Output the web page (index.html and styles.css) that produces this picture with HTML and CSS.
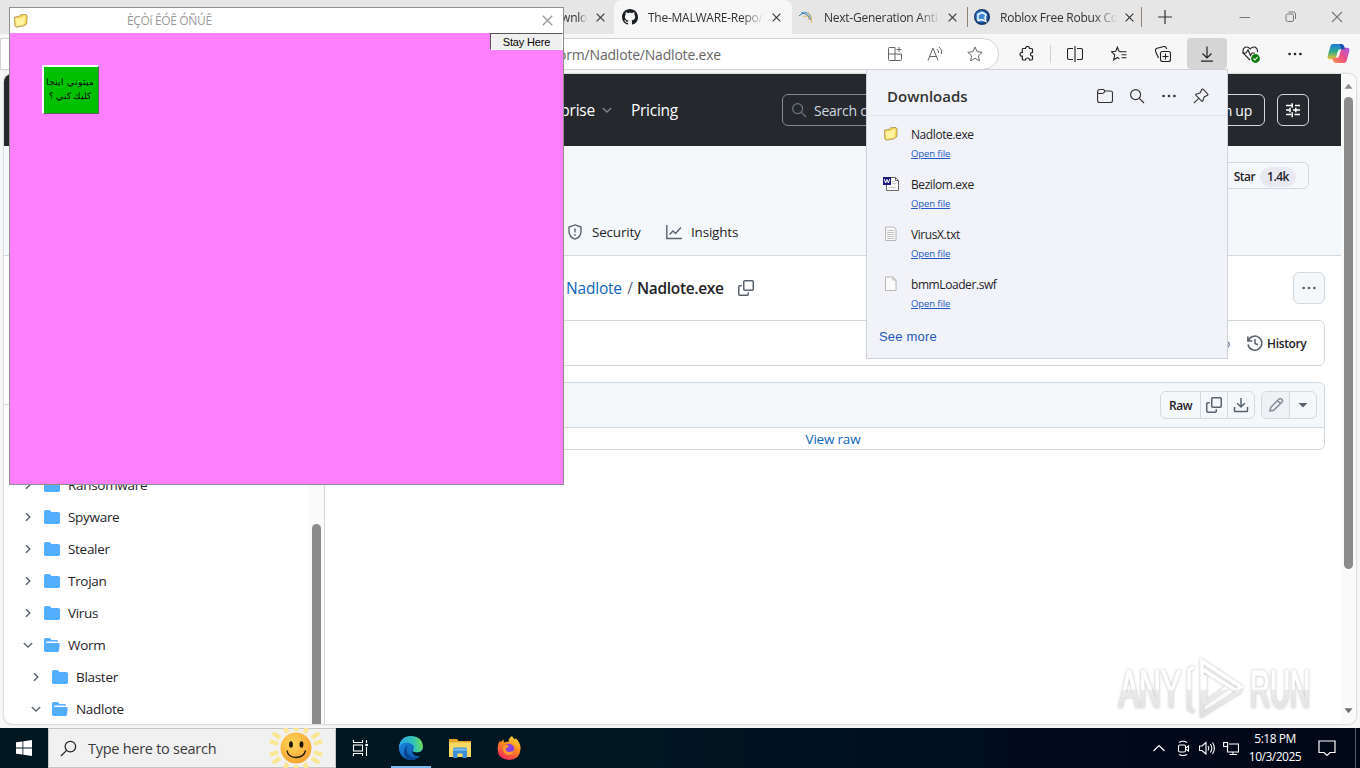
FILE: index.html
```html
<!DOCTYPE html>
<html lang="en">
  <head>
    <meta charset="UTF-8" />
    <meta name="viewport" content="width=device-width, initial-scale=1.0" />
    <title>Desktop</title>
    <link rel="stylesheet" href="styles.css">
  </head>
  <body>
    <svg class="defs" width="0" height="0">
      <symbol id="close" viewBox="0 0 10 10"><path d="M.7.7l8.6 8.6M9.3.7L.7 9.3" fill="none" stroke="currentColor" stroke-width="1.2"/></symbol>
      <symbol id="chev" viewBox="0 0 12 12"><path d="M4 2.2L7.8 6 4 9.8" fill="none" stroke="currentColor" stroke-width="1.4"/></symbol>
      <symbol id="chevDown" viewBox="0 0 12 12"><path d="M1.8 4L6 8l4.2-4" fill="none" stroke="currentColor" stroke-width="1.4"/></symbol>
      <symbol id="folder" viewBox="0 0 16 16"><path fill="#54aeff" d="M1.75 1A1.75 1.75 0 0 0 0 2.75v10.5C0 14.216.784 15 1.75 15h12.5A1.75 1.75 0 0 0 16 13.25v-8.5A1.75 1.75 0 0 0 14.25 3H7.5a.25.25 0 0 1-.2-.1l-.9-1.2C6.07 1.26 5.55 1 5 1H1.75Z"/></symbol>
      <symbol id="folderOpen" viewBox="0 0 16 16"><path fill="#54aeff" d="M.513 1.513A1.75 1.75 0 0 1 1.75 1h3.5c.55 0 1.07.26 1.4.7l.9 1.2a.25.25 0 0 0 .2.1H13a1 1 0 0 1 1 1v.5H2.75a.75.75 0 0 0 0 1.5h11.978a1 1 0 0 1 .994 1.117L15 13.25A1.75 1.75 0 0 1 13.25 15H1.75A1.75 1.75 0 0 1 0 13.25V2.75c0-.464.184-.91.513-1.237Z"/></symbol>
      <symbol id="copy" viewBox="0 0 16 16"><path fill="currentColor" d="M0 6.75C0 5.784.784 5 1.75 5h1.5a.75.75 0 0 1 0 1.5h-1.5a.25.25 0 0 0-.25.25v7.5c0 .138.112.25.25.25h7.5a.25.25 0 0 0 .25-.25v-1.5a.75.75 0 0 1 1.5 0v1.5A1.75 1.75 0 0 1 9.25 16h-7.5A1.75 1.75 0 0 1 0 14.25ZM5 1.75C5 .784 5.784 0 6.75 0h7.5C15.216 0 16 .784 16 1.75v7.5A1.75 1.75 0 0 1 14.25 11h-7.5A1.75 1.75 0 0 1 5 9.25Zm1.75-.25a.25.25 0 0 0-.25.25v7.5c0 .138.112.25.25.25h7.5a.25.25 0 0 0 .25-.25v-7.5a.25.25 0 0 0-.25-.25Z"/></symbol>
      <symbol id="dots" viewBox="0 0 16 16"><g fill="currentColor"><circle cx="2.6" cy="8" r="1.35"/><circle cx="8" cy="8" r="1.35"/><circle cx="13.4" cy="8" r="1.35"/></g></symbol>
      <symbol id="lens" viewBox="0 0 16 16"><g fill="none" stroke="currentColor" stroke-width="1.2"><circle cx="6.6" cy="6.6" r="5"/><path d="M10.3 10.3L15 15"/></g></symbol>
      <symbol id="yellowFolder" viewBox="0 0 16 16"><path fill="#f7d560" stroke="#8a7130" stroke-width=".6" d="M1.500 4l4.500-.5 1.500-1.800L13 1.500l1.200 1.500-.5 8-3.200 2L3 14.200 1.800 12.500z"/><path fill="#fff3a0" d="M2.500 5.500l6-.5 1.500-1.500 2.500 0-1.500 8L3.500 13z"/></symbol>
    </svg>

    <div class="browser">
      <div class="tabs">
        <div class="tab first">
          <svg class="favicon" viewBox="0 0 16 16"><circle cx="8" cy="8" r="7.500" fill="#c43a24"/></svg>
        </div>
        <div class="tab second"><span class="tabText">Downlo</span><svg class="x"><use href="#close"/></svg></div>
        <div class="tab active">
          <svg class="favicon" viewBox="0 0 16 16"><path fill="#1b1f24" d="M8 0C3.580 0 0 3.580 0 8c0 3.540 2.290 6.530 5.470 7.590.4.070.55-.17.55-.38 0-.19-.01-.82-.01-1.490-2.010.37-2.530-.49-2.690-.94-.09-.23-.48-.94-.82-1.130-.28-.15-.68-.52-.01-.53.63-.01 1.080.58 1.230.82.72 1.210 1.870.87 2.330.66.07-.52.28-.87.51-1.070-1.780-.2-3.640-.89-3.640-3.950 0-.87.31-1.590.82-2.150-.08-.2-.36-1.020.08-2.120 0 0 .67-.21 2.200.82.64-.18 1.320-.27 2-.27s1.360.09 2 .27c1.530-1.040 2.200-.82 2.200-.82.44 1.100.16 1.920.08 2.120.51.56.82 1.270.82 2.150 0 3.070-1.870 3.750-3.650 3.950.29.25.54.73.54 1.480 0 1.070-.01 1.930-.01 2.200 0 .21.15.46.55.38A8.010 8.010 0 0 0 16 8c0-4.420-3.580-8-8-8z"/></svg>
          <span class="tabText">The-MALWARE-Repo/</span>
          <svg class="x"><use href="#close"/></svg>
        </div>
        <div class="tab">
          <svg class="favicon" viewBox="0 0 16 16"><g fill="none" stroke-width="1"><path stroke="#2d7fae" d="M1 7q6-7 12 4"/><path stroke="#5a9bc0" d="M3 4q7-3 10 5"/><path stroke="#e3b761" d="M5 8q5-3 6 3M10 3q5 5 3 11"/></g></svg>
          <span class="tabText">Next-Generation Anti</span>
          <svg class="x"><use href="#close"/></svg>
        </div>
        <div class="tab last">
          <svg class="favicon" viewBox="0 0 16 16"><circle cx="8" cy="8" r="8" fill="#173a70"/><circle cx="7.500" cy="7.500" r="6" fill="#3e86db"/><path d="M4 5.500l4-2 4 2-1 3 1 4-4-2-4 1z" fill="none" stroke="#fff" stroke-width="1.400"/></svg>
          <span class="tabText">Roblox Free Robux Co</span>
          <svg class="x"><use href="#close"/></svg>
        </div>
        <svg class="plus" viewBox="0 0 14 14"><path d="M7 0v14M0 7h14" stroke="#333" stroke-width="1.200"/></svg>
        <div class="winBtns">
          <svg viewBox="0 0 12 12"><path d="M.5 6.500h10.500" stroke="#777"/></svg>
          <svg viewBox="0 0 12 12" fill="none" stroke="#777"><rect x="1" y="3" width="7.500" height="7.500" rx="1.500"/><path d="M3.500 1h5a2 2 0 0 1 2 2v5"/></svg>
          <svg viewBox="0 0 12 12"><path d="M1 1l10 10M11 1L1 11" stroke="#777" stroke-width="1.100"/></svg>
        </div>
      </div>

      <div class="toolbar">
        <div class="address">
          <span class="url">Worm/Nadlote/Nadlote.exe</span>
          <div class="addressIcons">
            <svg viewBox="0 0 16 16" fill="none" stroke="#666"><path d="M8 1.500H2.500a1 1 0 0 0-1 1v11a1 1 0 0 0 1 1h11a1 1 0 0 0 1-1V8H1.500M8 1.500v13M12 1v5M9.500 3.500h5"/></svg>
            <svg viewBox="0 0 16 16" fill="none" stroke="#666"><path d="M1 14.500L6 2l5 12.500M2.800 10.500h6.400M10 3q2 1.500 1.500 4M12 1q3.500 2.500 2.500 7"/></svg>
            <svg viewBox="0 0 16 16" fill="none" stroke="#666"><path d="M8 1l2.100 4.700 5.100.6-3.800 3.500 1 5L8 12.300l-4.400 2.500 1-5L.8 6.300l5.100-.6z"/></svg>
          </div>
        </div>
        <div class="tools">
          <div class="tool"><svg viewBox="0 0 16 16" fill="none" stroke="#222" stroke-width="1.200"><path d="M4 2.500h2.500a2 2 0 0 1 4 0h2q1 0 1 1V6.500h-.7a1.800 1.800 0 0 0 0 3.500h.7v3q0 1-1 1h-2a2 2 0 0 0-4 0H4.500q-1.200 0-1.200-1V10.200a1.900 1.900 0 1 1 0-3.700V3.500q0-1 .7-1z"/></svg></div>
          <div class="tool"><svg viewBox="0 0 16 16" fill="none" stroke="#222" stroke-width="1.100"><path d="M8 0v16M6 2.500H2a1.500 1.500 0 0 0-1.500 1.500v8A1.500 1.500 0 0 0 2 13.500h4M10 2.500h4a1.500 1.500 0 0 1 1.500 1.500v8a1.500 1.500 0 0 1-1.500 1.500h-4"/></svg></div>
          <div class="tool"><svg viewBox="0 0 16 16" fill="none" stroke="#222" stroke-width="1.100"><path d="M8.500 5.700H15.500M10.500 8.700h5M10.500 11.700h5M10 5.500L8 5.300 6.400 1.200 4.700 5.300.5 5.800l3.200 3-1 5 3.700-2.300 2 1.400"/></svg></div>
          <div class="tool"><svg viewBox="0 0 16 16" fill="none" stroke="#222" stroke-width="1.100"><rect x="5.500" y="5.500" width="10" height="10" rx="2"/><path d="M10.500 7.500v6M7.500 10.500h6M3.500 12L.6 5.500Q0 3 2 2.200L9 .5q2-.3 2.700 2.500"/></svg></div>
          <div class="tool pressed"><svg viewBox="0 0 16 16" fill="none" stroke="#222" stroke-width="1.200"><path d="M8 .5v11M3.500 7.500L8 12l4.500-4.500M2 15.200h12"/></svg></div>
          <div class="tool"><svg class="health" viewBox="0 0 18 18" fill="none" stroke="#222" stroke-width="1.100"><path d="M8 15L2 9Q-.5 4.500 3 2.300 6 1.100 8.200 4 10.500 1.100 13.500 2.300q2.500 2 2 4.700M0 8h4l2-3 2.500 5.500L10 8h3"/><circle cx="13.500" cy="13.500" r="4.400" fill="#107c10" stroke="none"/><path stroke="#fff" d="M11.500 13.500l1.500 1.500 2.600-3"/></svg></div>
          <div class="tool"><svg viewBox="0 0 16 16"><use href="#dots"/></svg></div>
          <div class="tool copilot">
            <svg viewBox="0 0 24 24">
              <defs>
                <linearGradient id="cpA" x1="0" y1="0" x2="0" y2="1"><stop offset="0" stop-color="#1f7be0"/><stop offset=".5" stop-color="#2fa98c"/><stop offset="1" stop-color="#f2c230"/></linearGradient>
                <linearGradient id="cpB" x1="1" y1="0" x2="0" y2="1"><stop offset="0" stop-color="#a55be8"/><stop offset=".5" stop-color="#ee4f86"/><stop offset="1" stop-color="#f9964b"/></linearGradient>
              </defs>
              <path fill="url(#cpA)" d="M6 2h9q2 0 3 3l.7 2.500H14q-2 0-2.600 2L9.500 16q-.6 2-2.500 2H3q-3 0-2.300-3.500L3.500 4.500Q4.200 2 6 2z"/>
              <path fill="url(#cpB)" d="M18 22H9q-2 0-3-3l-.7-2.500H10q2 0 2.600-2L14.500 8q.6-2 2.500-2h4q3 0 2.300 3.500L20.500 19.500Q19.800 22 18 22z"/>
              <path fill="#1c4fb5" d="M13 2h2q2 0 3 3l.7 2.500H15z"/>
            </svg>
          </div>
        </div>
      </div>

      <div class="page">
        <div class="site">
          <header class="siteHeader">
            <nav><span>Enterprise</span><svg class="navChev"><use href="#chevDown"/></svg><span class="pricing">Pricing</span></nav>
            <div class="searchBox"><svg><use href="#lens"/></svg><span>Search or</span></div>
            <div class="headerBtns">
              <div class="signUp">Sign up</div>
              <div class="prefs"><svg viewBox="0 0 16 16" stroke="#fff" stroke-width="1.500" fill="none"><path d="M1 3.500h6M10 3.500h5M7.200 1.200v4.500M1 8h3.500M8 8h7M5 5.800v4.500M1 12.500h5M9.500 12.500H15M7.200 10.200v5M10.800 5.800v4.500"/></svg></div>
            </div>
          </header>
          <div class="repoHead">
            <div class="starBtn">Star<span class="count">1.4k</span></div>
            <nav class="repoNav">
              <svg viewBox="0 0 16 16" fill="none" stroke="#59636e" stroke-width="1.400"><path d="M8 .9L14 3v4.500Q14 13 8 15.200 2 13 2 7.500V3z"/><path d="M8 4.500v4M8 10v1.700"/></svg>
              <span class="security">Security</span>
              <svg viewBox="0 0 16 16" fill="none" stroke="#59636e" stroke-width="1.400"><path d="M.8 1v13.500H16M3.500 10.500L7 7l2.500 2.500 5.500-6"/></svg>
              <span class="insights">Insights</span>
            </nav>
          </div>
          <div class="columns">
            <aside class="sidebar">
              <div class="sideHead"></div>
              <div class="treeWrap">
                <ul class="tree">
                  <li><svg class="arrow"><use href="#chev"/></svg><svg><use href="#folder"/></svg>Ransomware</li>
                  <li><svg class="arrow"><use href="#chev"/></svg><svg><use href="#folder"/></svg>Spyware</li>
                  <li><svg class="arrow"><use href="#chev"/></svg><svg><use href="#folder"/></svg>Stealer</li>
                  <li><svg class="arrow"><use href="#chev"/></svg><svg><use href="#folder"/></svg>Trojan</li>
                  <li><svg class="arrow"><use href="#chev"/></svg><svg><use href="#folder"/></svg>Virus</li>
                  <li><svg class="arrow"><use href="#chevDown"/></svg><svg><use href="#folderOpen"/></svg>Worm</li>
                  <li class="sub"><svg class="arrow"><use href="#chev"/></svg><svg><use href="#folder"/></svg>Blaster</li>
                  <li class="sub"><svg class="arrow"><use href="#chevDown"/></svg><svg><use href="#folderOpen"/></svg>Nadlote</li>
                </ul>
                <div class="treeScroll"><div class="treeThumb"></div></div>
              </div>
            </aside>
            <main class="content">
              <div class="crumbs">
                <a class="crumbLink">Nadlote</a><span class="slash">/</span><b>Nadlote.exe</b>
                <svg class="copyPath"><use href="#copy"/></svg>
                <div class="moreBtn"><svg><use href="#dots"/></svg></div>
              </div>
              <div class="commit">
                <span class="ago">5 years ago</span>
                <svg viewBox="0 0 16 16" fill="none" stroke="#59636e" stroke-width="1.500"><path d="M1.200 6A7 7 0 1 1 1 9.500M.8 1.500V6h4.500M8 4v4.500l3 1.200"/></svg>
                <b>History</b>
              </div>
              <div class="fileBox">
                <div class="fileHead">
                  <div class="group">
                    <div class="raw">Raw</div>
                    <div class="cell"><svg><use href="#copy"/></svg></div>
                    <div class="cell"><svg viewBox="0 0 16 16" fill="none" stroke="#59636e" stroke-width="1.500"><path d="M8 1v8.500M4.200 6.200L8 10l3.800-3.800M1.500 10v3.700q0 .8.800.8h11.400q.8 0 .8-.8V10"/></svg></div>
                  </div>
                  <div class="group">
                    <div class="cell edit"><svg viewBox="0 0 16 16" fill="none" stroke="#818b98" stroke-width="1.500"><path d="M2 14l.8-3.700L11 2q1.200-1.100 2.300 0l.7.700q1.100 1.200 0 2.300L5.700 13.200zM9.500 3.700l2.800 2.800"/></svg></div>
                    <div class="cell"><svg viewBox="0 0 16 16"><path d="M3.500 6h9L8 10.500z" fill="#59636e"/></svg></div>
                  </div>
                </div>
                <div class="viewRaw">View raw</div>
              </div>
            </main>
          </div>
        </div>
        <div class="scrollbar">
          <svg viewBox="0 0 10 6"><path d="M.5 6L5 .5 9.500 6z" fill="#8b8b8b"/></svg>
          <div class="thumb"></div>
          <svg class="down" viewBox="0 0 10 6"><path d="M.5 0L5 5.500 9.500 0z" fill="#6f6f6f"/></svg>
        </div>
      </div>
    </div>

    <div class="taskbar">
      <div class="start"><svg viewBox="0 0 16 16" fill="#fff"><path d="M0 2.300l6.500-.9v6.200H0zM7.300 1.300L16 0v7.600H7.300zM0 8.400h6.500v6.200L0 13.700zM7.300 8.400H16V16l-8.700-1.300z"/></svg></div>
      <div class="taskSearch">
        <svg class="lens" viewBox="0 0 18 18" fill="none" stroke="#222" stroke-width="1.300"><circle cx="11" cy="7" r="5.600"/><path d="M7 11L1 17"/></svg>
        <span>Type here to search</span>
        <svg class="sun" viewBox="0 0 56 40">
          <defs><radialGradient id="sunFace" cx=".4" cy=".35" r=".7"><stop offset="0" stop-color="#ffd75a"/><stop offset="1" stop-color="#f5a02c"/></radialGradient></defs>
          <path stroke="#fbe796" stroke-width="4.500" fill="none" d="M19.500 5L17 0M36.500 5L39 0M28 3V-1M12 10L5 5M44 10l7-5M10 16L2 13M46 16l8-3M10 24L2 27M46 24l8 3M12 30l-7 5M44 30l7 5M19.500 35L17 40M36.500 35L39 40M28 37v4"/>
          <circle cx="28" cy="20" r="15.500" fill="url(#sunFace)"/>
          <ellipse cx="23" cy="16.500" rx="1.900" ry="3.200" fill="#20160c"/><ellipse cx="33.500" cy="16.500" rx="1.900" ry="3.200" fill="#20160c"/>
          <path d="M19 22.500q1 7 9 7t9.500-7" fill="none" stroke="#20160c" stroke-width="1.300"/>
        </svg>
      </div>
      <div class="apps">
        <div class="app"><svg class="taskView" viewBox="0 0 16 16" fill="none" stroke="#fff" stroke-width="1.100"><path d="M1.500 0v2.500h9V0M1.500 16v-2.500h9V16M14.500 0v3M14.500 7v9"/><rect x="1.500" y="5" width="9" height="6"/><path d="M13.300 5h2.600" stroke-width="2.200"/></svg></div>
        <div class="app open">
          <svg class="big" viewBox="0 0 24 24">
            <defs>
              <linearGradient id="edA" x1="0" y1=".3" x2="1" y2=".2"><stop offset="0" stop-color="#2aa7e8"/><stop offset=".6" stop-color="#33c4b4"/><stop offset="1" stop-color="#6fe04c"/></linearGradient>
              <linearGradient id="edB" x1="0" y1="0" x2="1" y2="1"><stop offset="0" stop-color="#1a8fe3"/><stop offset="1" stop-color="#0c4fa8"/></linearGradient>
            </defs>
            <circle cx="12" cy="12" r="12" fill="url(#edB)"/>
            <path fill="url(#edA)" d="M0 11.500Q1 0 12.500 0 23.500.8 24 10.500q-.5 6-6.500 6-4.500 0-3.500-2.500 2-2.500-.2-5Q11.500 6.500 8 6.500q-6 .3-8 5z"/>
            <path fill="#0b4493" d="M9 9.500Q6 14 9.500 18.500q4.500 5 11.500 1.500Q17 24.500 11 24 4.500 22 5 15.500 5.500 11 9 9.500z"/>
            <path fill="#001720" d="M14 14q-1 2.500 3.500 2.500 4 .3 6.700-3l.3 4.500-2.500 1.500q-5 1.500-7.300-1t-.7-4.500z"/>
          </svg>
        </div>
        <div class="app"><svg class="big" viewBox="0 0 24 24"><path fill="#e8a92a" d="M1 3h8l1.500 2H23v5H1z"/><path fill="#ffd766" d="M1 6.500h22V21H1z"/><path fill="#3c8fd6" d="M5 13q0-1.500 1.500-1.500h11Q19 11.500 19 13v9h-4.500v-4.500h-5V22H5z"/><path fill="#7bc1f2" d="M5 14.500h14v-1.800H5z"/></svg></div>
        <div class="app">
          <svg class="big" viewBox="0 0 24 24">
            <defs><linearGradient id="ffA" x1=".8" y1="0" x2=".3" y2="1"><stop offset="0" stop-color="#ffe03d"/><stop offset=".45" stop-color="#ff8a1e"/><stop offset="1" stop-color="#f4265b"/></linearGradient></defs>
            <path fill="url(#ffA)" d="M15 0q1 2 3 3.500.6-.4.500-1.500 5.500 5 5 11.500Q22.500 24 12 24 1 23.500.5 13q0-5 2.500-8.500l.8 2Q5 4 6.500 3.500L7 6.500q2-1 4.500-.5Q11.500 2 15 0z"/>
            <circle cx="12" cy="13" r="5.300" fill="#8a3fe0"/>
            <path fill="#ff9a2b" d="M5.500 10.500q3-2.500 6.500-1-1 2.500-3.500 3 .5 3.500 4 3.500 3 0 5-2-1 5-6 5-5.500-.5-6-8.500z"/>
          </svg>
        </div>
      </div>
      <div class="tray">
        <svg viewBox="0 0 16 16" fill="none" stroke="#fff" stroke-width="1.200"><path d="M2.500 11L8 5.500l5.500 5.500"/></svg>
        <svg viewBox="0 0 16 16" fill="none" stroke="#fff" stroke-width="1.100"><rect x="3.500" y="5" width="7" height="7" rx="1.500"/><path d="M10.500 8l3-2v5l-3-2M4 2.500q4-2.500 8 0M4 14.500q4 2 8 0"/></svg>
        <svg viewBox="0 0 16 16" fill="none" stroke="#fff" stroke-width="1.100"><path d="M.5 6v4.500h2.500L7 14V2.500L3 6zM9 6q1.500 2.200 0 4.500M11.300 4q3 4.200 0 8.500M13.500 2.500q3.800 5.700 0 11.500"/></svg>
        <svg viewBox="0 0 16 16" fill="none" stroke="#fff" stroke-width="1.100"><path d="M6 4h9.500v8h-11V7M10 12v2.500M6.500 14.500h7.500"/><rect x=".6" y="2.500" width="4" height="4"/></svg>
        <div class="clock"><span>5:18 PM</span><span>10/3/2025</span></div>
        <svg class="notify" viewBox="0 0 18 18" fill="none" stroke="#fff" stroke-width="1.200"><path d="M1 2h16v11.500h-5l-3 3-3-3H1z"/></svg>
        <div class="peek"></div>
      </div>
    </div>

    <section class="downloads">
      <div class="dlHead">
        <h2>Downloads</h2>
        <svg viewBox="0 0 16 16" fill="none" stroke="#333" stroke-width="1.100"><path d="M.6 4v8.500Q.6 14.500 2.500 14.500h11q2 0 2-2V5q0-2-2-2H8L6.500 1.500h-4Q.6 1.500.6 4zm0 1.500H5.500Q7 5.500 8 3"/></svg>
        <svg><use href="#lens"/></svg>
        <svg><use href="#dots"/></svg>
        <svg viewBox="0 0 16 16" fill="none" stroke="#333" stroke-width="1.100"><path d="M10 1.200L14.800 6q.5.700-.3 1.200l-3.300 1.700-1.500 4.100q-.4.700-1 .1L3 7.300q-.6-.6.100-1l4.100-1.500L8.800 1.500Q9.300.6 10 1.200zM5.700 10.300L.8 15.200"/></svg>
      </div>
      <div class="dlItem">
        <svg><use href="#yellowFolder"/></svg>
        <div><p>Nadlote.exe</p><a>Open file</a></div>
      </div>
      <div class="dlItem">
        <svg viewBox="0 0 16 16"><path d="M5.500 1.500h7L15.500 4.500v10h-12V9" fill="#fff" stroke="#555" stroke-width=".9"/><path d="M12.500 1.500v3h3" fill="none" stroke="#555" stroke-width=".9"/><path d="M9 5.500h3M9 7.500h4M6 11.500h7" stroke="#ccc"/><rect x="0" y="1" width="8" height="8" fill="#1b1b86"/><path d="M1.300 3l1.300 4L4 3.500 5.400 7l1.300-4" fill="none" stroke="#fff"/></svg>
        <div><p>Bezilom.exe</p><a>Open file</a></div>
      </div>
      <div class="dlItem">
        <svg viewBox="0 0 16 16"><path d="M2.500 1h8.500l2 2v11.500H2.500z" fill="#fafafa" stroke="#b0b0b0" stroke-width=".9"/><path d="M4 4.500h7.500M4 6.500h7.500M4 8.500h7.500M4 10.500h7.500M4 12.500h7.500" stroke="#b5b5b5" stroke-width=".8"/></svg>
        <div><p>VirusX.txt</p><a>Open file</a></div>
      </div>
      <div class="dlItem">
        <svg viewBox="0 0 16 16"><path d="M2.500 1h7.500l3 3v10.500H2.500z" fill="#fafafa" stroke="#b0b0b0" stroke-width=".9"/><path d="M10 1v3h3" fill="none" stroke="#b0b0b0" stroke-width=".9"/></svg>
        <div><p>bmmLoader.swf</p><a>Open file</a></div>
      </div>
      <a class="seeMore">See more</a>
    </section>

    <section class="popup">
      <div class="popupTitle">
        <svg class="popupIcon"><use href="#yellowFolder"/></svg>
        <span>ÈÇÒí ÊÓÊ ÓÑÚÊ</span>
        <svg class="popupClose"><use href="#close"/></svg>
      </div>
      <div class="popupBody">
        <button class="stay">Stay Here</button>
        <button class="green" lang="fa" dir="rtl">ميتوني اينجا<br>كليك كني ؟</button>
      </div>
    </section>

    <svg class="watermark" viewBox="0 0 200 66">
      <defs>
        <linearGradient id="wm" gradientUnits="userSpaceOnUse" x1="0" y1="14" x2="0" y2="54"><stop offset=".48" stop-color="#fff"/><stop offset=".5" stop-color="#ececec"/><stop offset="1" stop-color="#e2e2e2"/></linearGradient>
      </defs>
      <g class="marks" fill="url(#wm)" stroke="url(#wm)">
        <text x="4" y="51" textLength="62" lengthAdjust="spacingAndGlyphs">ANY</text>
        <path fill="none" d="M90 19v28l22-15.500M87 5l39 26-5 3.500L87 13zM87 13v46l39-24.500M79 11l-5 3v39l5 3"/>
        <text x="135" y="51" textLength="60" lengthAdjust="spacingAndGlyphs">RUN</text>
      </g>
    </svg>
  </body>
</html>
```
FILE: styles.css
```css
* {
  box-sizing: border-box;
}
body {
  margin: 0;
  width: 1360px;
  height: 768px;
  overflow: hidden;
  position: relative;
  font-family: "Open Sans", "Noto Sans", sans-serif;
  font-size: 13.5px;
  letter-spacing: -0.2px;
  color: #1f2328;
}
svg {
  display: block;
  flex: none;
  width: 16px;
  height: 16px;
}
svg.defs {
  position: absolute;
  width: 0;
  height: 0;
}
.browser {
  height: 728px;
  background: #f7f7f7;
  display: flex;
  flex-direction: column;
}

/* tabs */
.tabs {
  height: 34px;
  background: #e6e6e6;
  display: flex;
  align-items: center;
  font-size: 12px;
  letter-spacing: -0.25px;
  color: #333;
}
.tab {
  width: 175px;
  height: 34px;
  display: flex;
  align-items: center;
  padding: 0 10px 0 6px;
  white-space: nowrap;
}
.tab.first {
  width: 436px;
  padding-left: 21px;
}
.tab.second {
  width: 178px;
  justify-content: flex-end;
  padding-right: 9px;
}
.tab.second .tabText {
  flex: none;
  margin: 0 9px 0 0;
}
.tab.active {
  width: 178px;
  background: #f7f7f7;
  border-radius: 8px 8px 0 0;
  padding: 0 11px 0 8px;
}
.tab.last {
  padding-left: 6px;
  border-left: 1px solid #8f8378;
  border-right: 1px solid #8f8378;
  height: 20px;
}
.tabText {
  flex: 1;
  margin: 0 7px 0 10px;
  -webkit-mask-image: linear-gradient(90deg, #000 80%, transparent);
  mask-image: linear-gradient(90deg, #000 80%, transparent);
}
.x {
  width: 9px;
  height: 9px;
  color: #333;
}
.plus {
  width: 14px;
  height: 14px;
  margin-left: 16px;
}
.winBtns {
  display: flex;
  gap: 34px;
  margin-left: auto;
  margin-right: 17px;
}
.winBtns svg {
  width: 12px;
  height: 12px;
}

/* toolbar */
.toolbar {
  height: 40px;
  display: flex;
  padding-top: 4px;
}
.address {
  width: 999px;
  height: 32px;
  background: #fff;
  border: 1px solid #d2d2d2;
  border-radius: 0 16px 16px 0;
  display: flex;
  align-items: center;
  justify-content: space-between;
  padding-right: 15px;
  font-size: 14px;
  color: #666;
}
.url {
  width: 720px;
  text-align: right;
}
.addressIcons {
  display: flex;
  gap: 24px;
}
.tools {
  display: flex;
  margin-left: 8px;
}
.tool {
  width: 44px;
  height: 31px;
  display: flex;
  align-items: center;
  justify-content: center;
}
.tool:first-child {
  border-right: 1px solid #d0d0d0;
  height: 18px;
  margin: 7px 2px 0 0;
  padding-right: 3px;
}
.tool.pressed {
  width: 40px;
  margin: 0 2px;
  background: #d5d5d5;
  border-radius: 4px;
}
.health {
  width: 18px;
  height: 18px;
}
.copilot {
  width: 42px;
}
.copilot svg {
  width: 23px;
  height: 23px;
}

/* web page */
.page {
  height: 650px;
  margin: 0 4px;
  display: flex;
  background: #fff;
  border-radius: 8px;
  overflow: hidden;
  box-shadow: 0 0 2px #999;
}
.site {
  width: 1337px;
  display: flex;
  flex-direction: column;
}
.siteHeader {
  height: 72px;
  background: #25292e;
  color: #fff;
  font-size: 15.5px;
  letter-spacing: -0.25px;
  display: flex;
  align-items: center;
  padding-right: 32px;
}
.siteHeader nav {
  width: 674px;
  display: flex;
  justify-content: flex-end;
  align-items: center;
}
.navChev {
  width: 12px;
  height: 12px;
  margin: 0 18px 0 6px;
  color: #7d8590;
}
.searchBox {
  width: 330px;
  height: 32px;
  margin-left: 104px;
  border: 1px solid #818b98;
  border-radius: 6px;
  display: flex;
  align-items: center;
  gap: 7px;
  padding-left: 8px;
  font-size: 14px;
  color: #d1d7e0;
}
.searchBox svg {
  color: #6e7781;
}
.headerBtns {
  margin-left: auto;
  display: flex;
  gap: 12px;
  font-size: 14px;
}
.signUp,
.prefs {
  height: 32px;
  border: 1px solid #d1d9e0;
  border-radius: 6px;
  display: flex;
  align-items: center;
  justify-content: center;
  padding: 0 12px;
}
.prefs {
  width: 32px;
  padding: 0;
}
.repoHead {
  height: 110px;
  background: #f5f8fb;
  border-bottom: 1px solid #d1d9e0;
  display: flex;
  flex-direction: column;
  padding: 16px 32px 0 0;
}
.starBtn {
  align-self: flex-end;
  height: 28px;
  border: 1px solid #d1d9e0;
  border-radius: 6px;
  display: flex;
  align-items: center;
  gap: 5px;
  padding: 2px 12px 0 34px;
  font-size: 12px;
  font-weight: 600;
  letter-spacing: -0.5px;
}
.count {
  background: #e8e9f1;
  border-radius: 10px;
  padding: 1px 7px 2px;
}
.repoNav {
  width: 735px;
  height: 48px;
  margin-top: 19px;
  display: flex;
  justify-content: flex-end;
  align-items: center;
}
.security {
  width: 50px;
  margin: 0 24px 0 9px;
}
.insights {
  width: 48px;
  margin-left: 9px;
}
.columns {
  flex: 1;
  display: flex;
  min-height: 0;
}
.sidebar {
  width: 321px;
  border-right: 1px solid #d1d9e0;
}
.sideHead {
  height: 149px;
  border-bottom: 1px solid #d1d9e0;
}
.treeWrap {
  display: flex;
  height: 319px;
}
.tree {
  flex: 1;
  margin: 0;
  padding: 64px 0 0;
  list-style: none;
  letter-spacing: -0.3px;
}
.tree li {
  height: 32px;
  display: flex;
  align-items: center;
  gap: 8px;
  padding-left: 18px;
}
.tree li.sub {
  padding-left: 26px;
}
.arrow {
  width: 12px;
  height: 12px;
  margin-right: 2px;
  color: #59636e;
}
.treeScroll {
  width: 16px;
  background: #fafafa;
  padding: 119px 3px 0 4px;
}
.treeThumb {
  height: 210px;
  background: #8b8b8b;
  border-radius: 5px 5px 0 0;
}
.content {
  flex: 1;
  padding: 16px;
}
.crumbs {
  height: 32px;
  display: flex;
  align-items: center;
  padding-left: 225px;
  font-size: 15.5px;
}
.crumbLink,
.viewRaw {
  color: #0e64b8;
}
.crumbLink {
  width: 57px;
}
.slash {
  width: 14px;
  text-align: center;
  color: #59636e;
}
.crumbs b {
  width: 87px;
  font-weight: 600;
  letter-spacing: -0.33px;
}
.copyPath {
  margin-left: 14px;
  color: #59636e;
}
.moreBtn {
  width: 32px;
  height: 32px;
  margin-left: auto;
  border: 1px solid #d1d9e0;
  border-radius: 6px;
  background: #f5f8fb;
  display: flex;
  align-items: center;
  justify-content: center;
  color: #59636e;
}
.commit {
  height: 46px;
  margin: 16px 0;
  border: 1px solid #d1d9e0;
  border-radius: 6px;
  display: flex;
  align-items: center;
  justify-content: flex-end;
  padding-right: 17px;
  font-size: 12px;
}
.ago {
  margin-right: 17px;
  color: #59636e;
}
.commit b {
  width: 40px;
  margin-left: 4px;
  font-weight: 600;
  letter-spacing: -0.35px;
}
.fileBox {
  height: 68px;
  border: 1px solid #d1d9e0;
  border-radius: 6px;
}
.fileHead {
  height: 45px;
  background: #f5f8fb;
  border-bottom: 1px solid #d1d9e0;
  border-radius: 6px 6px 0 0;
  display: flex;
  align-items: center;
  justify-content: flex-end;
  gap: 6px;
  padding-right: 7px;
}
.group {
  height: 28px;
  border: 1px solid #d1d9e0;
  border-radius: 6px;
  display: flex;
  align-items: center;
  overflow: hidden;
}
.raw {
  width: 39px;
  text-align: center;
  font-size: 12px;
  font-weight: 600;
  letter-spacing: -0.4px;
}
.cell {
  width: 27px;
  height: 28px;
  display: flex;
  align-items: center;
  justify-content: center;
  border-left: 1px solid #d1d9e0;
  color: #59636e;
}
.cell.edit {
  border-left: 0;
  background: #eff2f5;
}
.viewRaw {
  height: 22px;
  line-height: 22px;
  text-align: center;
}
.scrollbar {
  width: 15px;
  background: #fafafa;
  display: flex;
  flex-direction: column;
  align-items: center;
}
.scrollbar svg {
  width: 9px;
  height: 6px;
  margin-top: 9px;
}
.thumb {
  width: 9px;
  height: 472px;
  margin-top: 8px;
  border-radius: 5px;
  background: #8b8b8b;
}
.scrollbar .down {
  margin: auto 0 10px;
}

/* taskbar */
.taskbar {
  height: 40px;
  background: linear-gradient(90deg, #00171f, #001722 45%, #000a1b 80%, #000716);
  display: flex;
  color: #fff;
}
.start {
  width: 48px;
  display: flex;
  align-items: center;
  justify-content: center;
}
.taskSearch {
  width: 288px;
  background: #f1f1f1;
  border: 1px solid #c5c5c5;
  display: flex;
  align-items: center;
  padding-left: 11px;
  font-size: 14.5px;
  letter-spacing: -0.27px;
  color: #3b3b3b;
}
.lens {
  width: 17px;
  height: 17px;
  margin-right: 11px;
}
.sun {
  width: 56px;
  height: 40px;
  margin-left: auto;
  margin-right: 11px;
}
.apps {
  display: flex;
}
.app {
  width: 49px;
  display: flex;
  align-items: center;
  justify-content: center;
}
.app:first-child {
  width: 48px;
}
.app.open {
  width: 40px;
  margin: 0 4px 0 7px;
  border-bottom: 2px solid #76b9ed;
  padding-top: 2px;
}
.big {
  width: 24px;
  height: 24px;
}
.tray {
  margin-left: auto;
  display: flex;
  align-items: center;
  gap: 8px;
}
.clock {
  width: 56px;
  display: flex;
  flex-direction: column;
  align-items: center;
  font-size: 12px;
  line-height: 18px;
  letter-spacing: -0.5px;
}
.notify {
  width: 18px;
  height: 18px;
  margin-left: 7px;
}
.peek {
  width: 5px;
  height: 40px;
  margin-left: 11px;
  border-left: 1px solid #59606b;
}

/* downloads flyout */
.downloads {
  position: absolute;
  left: 866px;
  top: 69px;
  width: 362px;
  height: 290px;
  background: #f1f3f8;
  border: 1px solid #cfd2d8;
}
.dlHead {
  height: 46px;
  border-bottom: 1px solid #e2e5ea;
  display: flex;
  align-items: center;
  padding: 6px 18px 0 20px;
  gap: 16px;
  color: #333;
}
.dlHead h2 {
  margin: 0 auto 0 0;
  font-size: 15px;
  font-weight: 600;
  letter-spacing: 0;
}
.dlItem {
  height: 50px;
  display: flex;
  gap: 12px;
  padding: 10px 0 0 16px;
}
.dlItem p {
  margin: 0;
  font-size: 12px;
  line-height: 18px;
  letter-spacing: -0.42px;
}
.dlItem a {
  display: block;
  font-size: 9.5px;
  line-height: 20px;
  letter-spacing: -0.1px;
  color: #2458c5;
  text-decoration: underline;
}
.seeMore {
  display: block;
  margin: 13px 0 0 12px;
  font: 13px "Liberation Sans", sans-serif;
  letter-spacing: 0.2px;
  color: #2458b5;
}

/* pink window */
.popup {
  position: absolute;
  left: 9px;
  top: 7px;
  width: 555px;
  height: 478px;
  border: 1px solid #8f8f8f;
  background: #ff80ff;
}
.popupTitle {
  height: 25px;
  background: #fff;
  display: flex;
  align-items: center;
  padding: 0 10px 0 3px;
  font-size: 12px;
  letter-spacing: -0.35px;
  color: #999;
}
.popupTitle span {
  margin-left: 98px;
  margin-top: -1px;
}
.popupClose {
  width: 11px;
  height: 11px;
  margin-left: auto;
}
.popupBody {
  display: flex;
  flex-direction: column;
}
.popupBody button {
  padding: 0;
  font-family: "Liberation Sans", sans-serif;
  color: #000;
}
.stay {
  align-self: flex-end;
  width: 73px;
  height: 17px;
  background: #f0f0f0;
  border: 1px solid #fff;
  border-top-color: #555;
  border-left-color: #555;
  font-size: 11px;
  letter-spacing: -0.15px;
}
.green {
  width: 57px;
  height: 49px;
  margin: 15px 0 0 32px;
  background: #00c000;
  border: 2px solid #fff;
  border-right: 1px solid #606060;
  border-bottom: 1px solid #606060;
  font-size: 8.5px;
  line-height: 14px;
}
.popupBody .green {
  padding: 0 2px 2px 0;
  letter-spacing: 0;
}

.watermark {
  position: absolute;
  left: 1115px;
  top: 656px;
  width: 200px;
  height: 66px;
}
.marks {
  stroke-width: 1.5;
  font: 51px "Liberation Sans Narrow", "Liberation Sans", sans-serif;
  filter: drop-shadow(0 0 1.5px #bdbdbd);
}
.marks path {
  stroke-width: 3.5;
}
```
